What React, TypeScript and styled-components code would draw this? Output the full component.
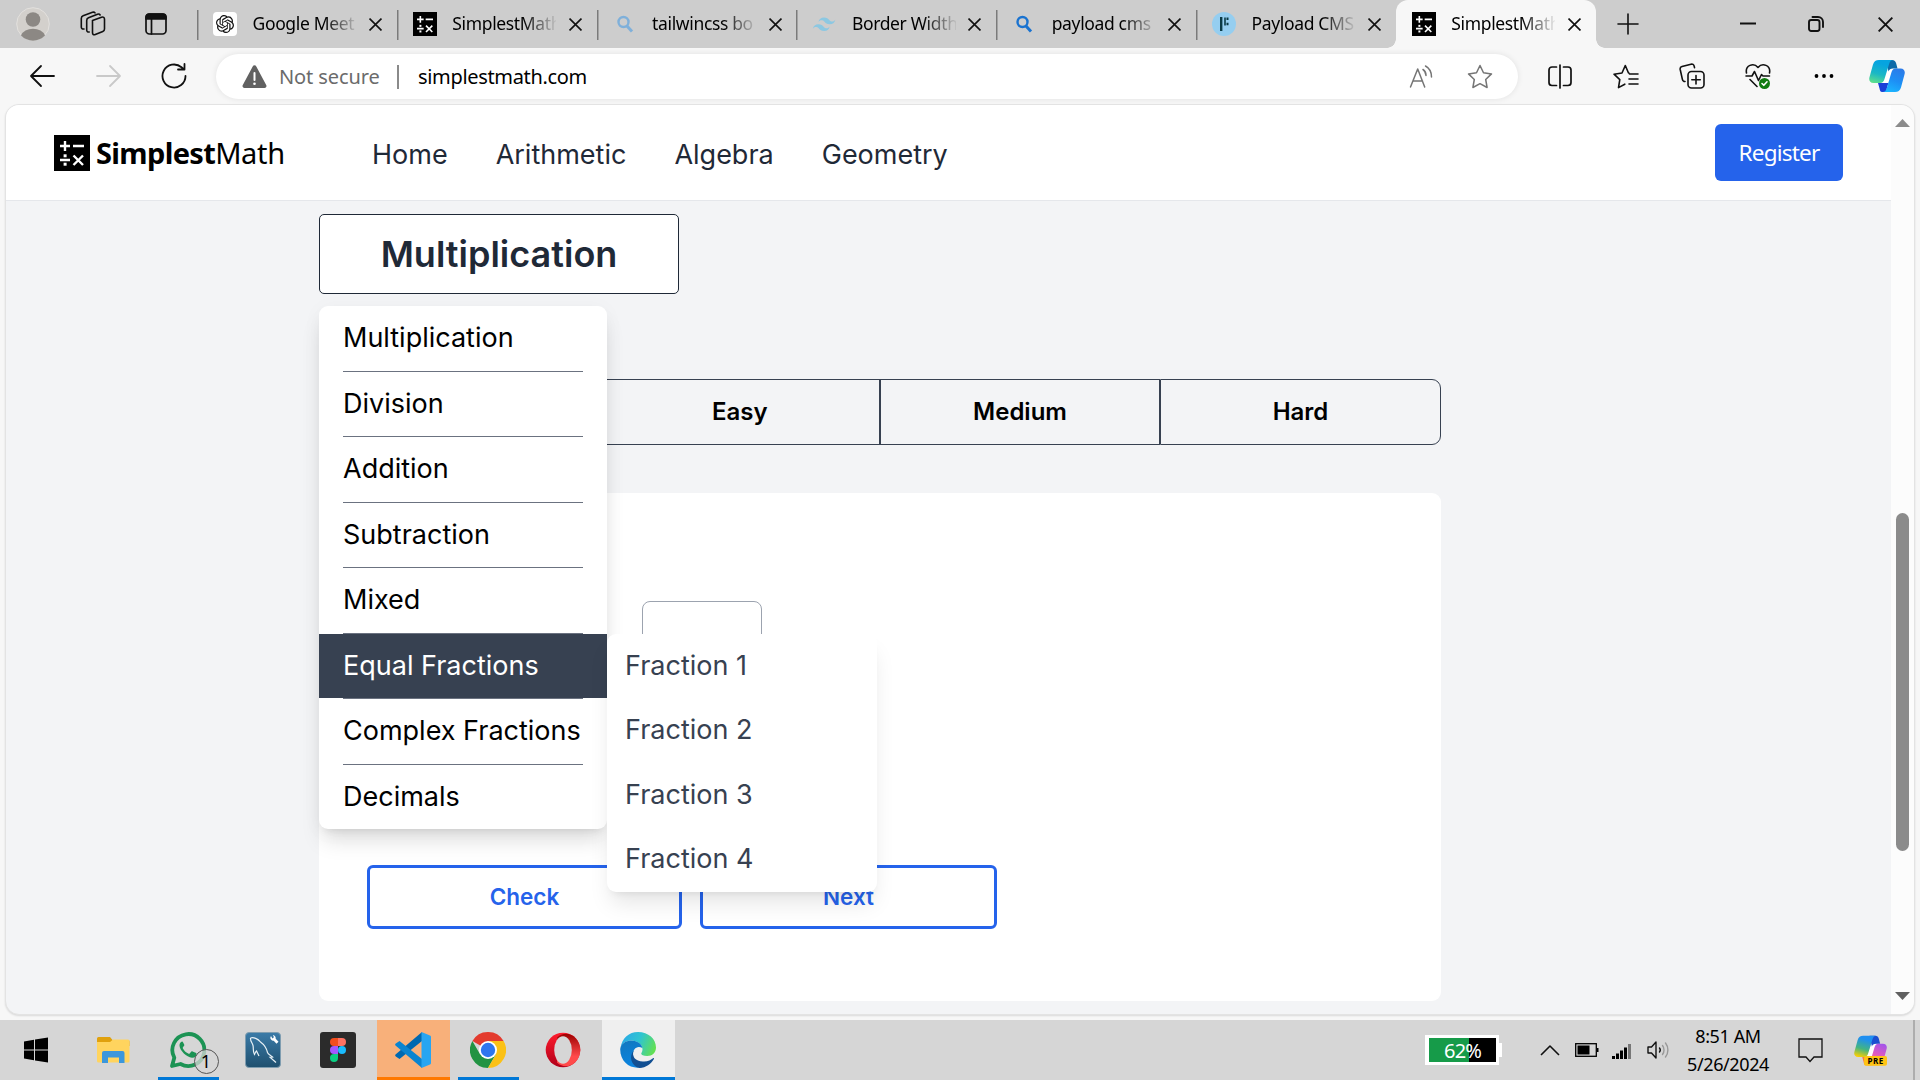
import React from "react";
import styled, { createGlobalStyle, css } from "styled-components";

const UI = '"Noto Sans", "Open Sans", sans-serif';
const INTER = 'Inter, "Open Sans", sans-serif';

const Global = createGlobalStyle`
  * { box-sizing: border-box; }
  html, body { margin: 0; padding: 0; overflow: hidden; }
  body { font-family: ${UI}; color: #000; }
  svg { display: block; flex: none; }
  button { font: inherit; margin: 0; cursor: pointer; }
`;

const Screen = styled.div`
  width: 1920px;
  height: 1080px;
  display: flex;
  flex-direction: column;
  background: #f7f7f7;
  overflow: hidden;
`;

/* ---------- Tab strip ---------- */
const TabStrip = styled.div`
  height: 48px;
  flex: none;
  display: flex;
  background: #cdcdcd;
`;
const StripTools = styled.div`
  width: 197px;
  flex: none;
  display: flex;
  align-items: center;
  padding-left: 16px;
`;
const ToolSlot = styled.div<{ $w: number }>`
  width: ${(p) => p.$w}px;
  flex: none;
`;
const Tab = styled.div<{ $active?: boolean }>`
  position: relative;
  width: ${(p) => (p.$active ? 200 : 199.8)}px;
  flex: none;
  display: flex;
  align-items: center;
  padding-left: 16px;
  ${(p) =>
    p.$active
      ? css`
          background: #f7f7f7;
          border-radius: 12px 12px 0 0;
          &::before, &::after {
            content: "";
            position: absolute;
            bottom: 0;
            width: 9px;
            height: 9px;
          }
          &::before { left: -9px; background: radial-gradient(circle at 0 0, transparent 8.5px, #f7f7f7 9px); }
          &::after { right: -9px; background: radial-gradient(circle at 100% 0, transparent 8.5px, #f7f7f7 9px); }
        `
      : css`
          background: linear-gradient(#7b7b7b, #7b7b7b) 0 10px / 1.5px 30px no-repeat;
        `}
`;
const TabLabel = styled.span`
  width: 104px;
  margin: 0 12.5px 2px 15.5px;
  overflow: hidden;
  white-space: nowrap;
  font-size: 17.5px;
  letter-spacing: -0.35px;
  line-height: 24px;
  mask-image: linear-gradient(to right, #000 68%, transparent 102%);
`;
const WindowTools = styled.div`
  flex: 1;
  display: flex;
  align-items: center;
  padding-left: 21px;
`;

/* ---------- Address bar ---------- */
const Toolbar = styled.div`
  height: 56px;
  flex: none;
  display: flex;
  align-items: center;
  padding: 0 0 0 29px;
`;
const AddressPill = styled.div`
  width: 1302px;
  height: 45px;
  flex: none;
  display: flex;
  align-items: center;
  background: #fff;
  border-radius: 23px;
  padding-left: 26px;
  margin-top: 1px;
  box-shadow: 0 0 6px rgba(0, 0, 0, 0.09);
`;
const Insecure = styled.span`
  width: 118px;
  margin-left: 12px;
  font-size: 20px;
  color: #6b6b6b;
  letter-spacing: -0.1px;
  white-space: nowrap;
`;
const PillRule = styled.i`
  width: 1.5px;
  height: 24px;
  background: #8a8a8a;
`;
const Url = styled.span`
  flex: 1;
  margin-left: 19.5px;
  font-size: 20px;
  letter-spacing: -0.33px;
`;

/* ---------- Page frame ---------- */
const Frame = styled.div`
  flex: 1;
  margin: 0 5px 5px 5px;
  display: flex;
  border: 1px solid #e3e3e3;
  border-radius: 14px;
  overflow: hidden;
  background: #f3f4f6;
  box-shadow: 0 1px 2px rgba(0, 0, 0, 0.12);
`;
const Page = styled.div`
  width: 1885px;
  flex: none;
  display: flex;
  flex-direction: column;
  font-family: ${INTER};
`;
const Header = styled.header`
  height: 96px;
  flex: none;
  display: flex;
  align-items: center;
  background: #fff;
  border-bottom: 1px solid #e5e7eb;
  padding: 0 48px;
`;
const Brand = styled.div`
  width: 318px;
  display: flex;
  align-items: center;
  gap: 6px;
  font-family: ${UI};
  font-size: 29px;
  letter-spacing: -0.35px;
  white-space: nowrap;
  b { font-weight: 700; letter-spacing: -0.65px; }
`;
const Nav = styled.nav`
  flex: 1;
  display: flex;
  gap: 48px;
  font-size: 27px;
  color: #1f2937;
  padding-top: 4px;
`;
const Register = styled.button`
  width: 128px;
  height: 57px;
  border: 0;
  border-radius: 6px;
  background: #2563eb;
  color: #fff;
  font-family: ${UI};
  font-size: 22.5px;
  letter-spacing: -0.8px;
  padding: 0;
`;
const Content = styled.main`
  width: 1122px;
  margin: 13px 0 0 313px;
  display: flex;
  flex-direction: column;
`;
const Picker = styled.div`
  position: relative;
  width: 360px;
  z-index: 1;
`;
const PickerButton = styled.button`
  display: block;
  width: 360px;
  height: 80px;
  border: 1px solid #1f2937;
  border-radius: 5px;
  background: #fff;
  color: #1f2937;
  font-size: 36px;
  font-weight: 600;
  padding: 0;
`;
const Levels = styled.div`
  display: flex;
  height: 66px;
  margin-top: 85px;
`;
const Level = styled.div`
  width: 280.5px;
  display: flex;
  align-items: center;
  justify-content: center;
  border: 1px solid #374151;
  font-size: 24px;
  font-weight: 600;
  padding-bottom: 2px;
  &:first-child { border-radius: 9px 0 0 9px; }
  &:nth-child(3) { width: 280px; }
  &:last-child { width: 281px; border-radius: 0 9px 9px 0; }
`;
const Card = styled.section`
  height: 508px;
  margin-top: 48px;
  display: flex;
  flex-direction: column;
  justify-content: space-between;
  background: #fff;
  border-radius: 9px;
  padding: 108px 48px 72px;
`;
const Answer = styled.div`
  width: 120px;
  height: 66px;
  margin-left: 275px;
  border: 1px solid #9ca3af;
  border-radius: 8px;
`;
const Actions = styled.div`
  display: flex;
  gap: 18px;
`;
const Action = styled.button<{ $w: number }>`
  width: ${(p) => p.$w}px;
  height: 64px;
  border: 3px solid #2563eb;
  border-radius: 6px;
  background: #fff;
  color: #2563eb;
  font-size: 22.5px;
  font-weight: 600;
  padding: 0 0 1px;
`;

/* ---------- Menus ---------- */
const panel = css`
  position: absolute;
  background: #fff;
  border-radius: 9px;
  font-size: 27px;
`;
const Menu = styled.div`
  ${panel}
  left: 0;
  top: 92px;
  width: 288px;
  box-shadow: 0 15px 22.5px -4.5px rgba(0, 0, 0, 0.13), 0 6px 9px -6px rgba(0, 0, 0, 0.11), 0 3px 20px rgba(0, 0, 0, 0.04);
`;
const MenuItem = styled.div<{ $selected?: boolean }>`
  position: relative;
  height: 64.5px;
  display: flex;
  align-items: center;
  padding: 0 0 1px 24px;
  white-space: nowrap;
  ${(p) => p.$selected && css`background: #374151; color: #fff;`}
`;
const MenuRule = styled.div`
  height: 1px;
  margin: 0 24px;
  background: #6b7280;
`;
const SubMenu = styled.div`
  ${panel}
  left: 288px;
  top: 0;
  width: 270px;
  color: #374151;
  box-shadow: 0 15px 22.5px -4.5px rgba(0, 0, 0, 0.1), 0 6px 9px -6px rgba(0, 0, 0, 0.1);
`;
const SubItem = styled.div`
  height: 64.5px;
  display: flex;
  align-items: center;
  padding: 0 0 1px 18px;
`;

/* ---------- Scrollbar ---------- */
const Scrollbar = styled.div`
  flex: 1;
  display: flex;
  flex-direction: column;
  align-items: center;
  justify-content: space-between;
  padding: 14px 0 14px;
  background: #fcfcfc;
`;
const Thumb = styled.div`
  width: 13px;
  height: 338px;
  margin-top: 245px;
  border-radius: 7px;
  background: #8b8b8b;
`;

/* ---------- Taskbar ---------- */
const Taskbar = styled.div`
  height: 60px;
  flex: none;
  display: flex;
  align-items: center;
  background: #d6d6d6;
`;
const Apps = styled.div`
  display: flex;
  gap: 2px;
  flex: 1;
`;
const Launcher = styled.div<{ $bg?: string; $line?: string; $inset?: number }>`
  position: relative;
  width: 73px;
  height: 60px;
  display: flex;
  align-items: center;
  justify-content: center;
  background: ${(p) => p.$bg ?? "transparent"};
  &:first-child { width: 74.5px; padding-right: 3px; }
  &::after {
    content: "";
    position: absolute;
    left: ${(p) => p.$inset ?? 0}px;
    right: ${(p) => p.$inset ?? 0}px;
    bottom: 0;
    height: 3px;
    background: ${(p) => p.$line ?? "transparent"};
  }
`;
const Count = styled.span`
  position: absolute;
  left: 42px;
  top: 29px;
  width: 25px;
  height: 25px;
  border: 1px solid #555;
  border-radius: 50%;
  background: rgba(214, 214, 214, 0.75);
  font-size: 18px;
  line-height: 23px;
  text-align: center;
`;
const Tray = styled.div`
  width: 495px;
  flex: none;
  display: flex;
  align-items: center;
  height: 60px;
`;
const Charge = styled.div`
  position: relative;
  width: 74px;
  height: 30px;
  border: 3px solid #fff;
  border-left-width: 4px;
  background: linear-gradient(to right, #169b49 60%, #000 60%);
  color: #fff;
  font-size: 20px;
  letter-spacing: -0.9px;
  line-height: 26px;
  text-align: center;
  &::after {
    content: "";
    position: absolute;
    right: -6px;
    top: 5px;
    width: 3px;
    height: 14px;
    background: #fff;
  }
`;
const Spot = styled.div<{ $ml: number }>`
  margin-left: ${(p) => p.$ml}px;
  flex: none;
`;
const Clock = styled.div`
  width: 96px;
  margin-left: 10px;
  text-align: center;
  font-size: 18px;
  letter-spacing: -0.4px;
  line-height: 28px;
`;
const ShowDesktop = styled.i`
  width: 2px;
  height: 60px;
  margin-left: 26px;
  background: #adadad;
`;

/* ---------- Icons ---------- */
type SvgProps = React.SVGProps<SVGSVGElement>;
const Line = ({ children, ...p }: SvgProps) => (
  <svg fill="none" stroke="#111" strokeWidth="1.6" strokeLinecap="round" strokeLinejoin="round" {...p}>
    {children}
  </svg>
);

const MathIcon = ({ size }: { size: number }) => (
  <svg width={size} height={size} viewBox="0 0 36 36">
    <rect width="36" height="36" />
    <g stroke="#fff" strokeWidth="2.4">
      <path d="M6 11h10M11 6v10M19 11h11M6 25h10M19.500 20.500l9.500 9.500M29 20.500l-9.500 9.500" />
    </g>
    <g fill="#fff">
      <rect x="9.600" y="19.300" width="3" height="3" />
      <rect x="9.600" y="27.700" width="3" height="3" />
    </g>
  </svg>
);
const Close = ({ size = 13 }: { size?: number }) => (
  <Line width={size} height={size} viewBox="0 0 12 12" strokeLinecap="butt" strokeWidth="1.500">
    <path d="M0.500 .5l11 11M11.500 .5l-11 11" />
  </Line>
);
const Search = ({ color }: { color: string }) => (
  <svg width="24" height="24" viewBox="0 0 24 24" fill="none" stroke={color} strokeWidth="2.400">
    <circle cx="10.500" cy="10" r="5" />
    <path d="M14 14l5 5.500" strokeWidth="3" />
  </svg>
);
const OpenAI = () => (
  <svg width="24" height="24" viewBox="0 0 24 24">
    <rect width="24" height="24" rx="4" fill="#fff" />
    <path
      transform="translate(3 3) scale(.75)"
      fill="#111"
      d="M22.2819 9.8211a5.9847 5.9847 0 0 0-.5157-4.9108 6.0462 6.0462 0 0 0-6.5098-2.9A6.0651 6.0651 0 0 0 4.9807 4.1818a5.9847 5.9847 0 0 0-3.9977 2.9 6.0462 6.0462 0 0 0 .7427 7.0966 5.98 5.98 0 0 0 .511 4.9107 6.051 6.051 0 0 0 6.5146 2.9001A5.9847 5.9847 0 0 0 13.2599 24a6.0557 6.0557 0 0 0 5.7718-4.2058 5.9894 5.9894 0 0 0 3.9977-2.9001 6.0557 6.0557 0 0 0-.7475-7.0729zm-9.022 12.6081a4.4755 4.4755 0 0 1-2.8764-1.0408l.1419-.0804 4.7783-2.7582a.7948.7948 0 0 0 .3927-.6813v-6.7369l2.02 1.1686a.071.071 0 0 1 .038.052v5.5826a4.504 4.504 0 0 1-4.4945 4.4944zm-9.6607-4.1254a4.4708 4.4708 0 0 1-.5346-3.0137l.142.0852 4.783 2.7582a.7712.7712 0 0 0 .7806 0l5.8428-3.3685v2.3324a.0804.0804 0 0 1-.0332.0615L9.74 19.9502a4.4992 4.4992 0 0 1-6.1408-1.6464zM2.3408 7.8956a4.485 4.485 0 0 1 2.3655-1.9728V11.6a.7664.7664 0 0 0 .3879.6765l5.8144 3.3543-2.0201 1.1685a.0757.0757 0 0 1-.071 0l-4.8303-2.7865A4.504 4.504 0 0 1 2.3408 7.872zm16.5963 3.8558L13.1038 8.364 15.1192 7.2a.0757.0757 0 0 1 .071 0l4.8303 2.7913a4.4944 4.4944 0 0 1-.6765 8.1042v-5.6772a.79.79 0 0 0-.407-.667zm2.0107-3.0231l-.142-.0852-4.7735-2.7818a.7759.7759 0 0 0-.7854 0L9.409 9.2297V6.8974a.0662.0662 0 0 1 .0284-.0615l4.8303-2.7866a4.4992 4.4992 0 0 1 6.6802 4.66zM8.3065 12.863l-2.02-1.1638a.0804.0804 0 0 1-.038-.0567V6.0742a4.4992 4.4992 0 0 1 7.3757-3.4537l-.142.0805L8.704 5.459a.7948.7948 0 0 0-.3927.6813zm1.0976-2.3654l2.602-1.4998 2.6069 1.4998v2.9994l-2.5974 1.4997-2.6067-1.4997Z"
    />
  </svg>
);
const Tailwind = () => (
  <svg width="24" height="24" viewBox="0 0 24 24" fill="#8cc8e2">
    <path d="M12 5.500c-3 0-4.900 1.500-5.600 4.500 1.100-1.500 2.400-2.100 3.900-1.700.9.200 1.500.8 2.200 1.500C13.600 11 14.900 12.300 17.700 12.300c3 0 4.900-1.500 5.600-4.500-1.100 1.500-2.400 2.100-3.900 1.700-.9-.2-1.500-.8-2.200-1.500C16.100 6.800 14.800 5.500 12 5.500zM6.400 12.200c-3 0-4.900 1.500-5.600 4.500 1.100-1.500 2.400-2.100 3.900-1.700.9.200 1.500.8 2.200 1.500 1.100 1.200 2.400 2.500 5.200 2.500 3 0 4.900-1.500 5.600-4.500-1.100 1.500-2.400 2.100-3.900 1.700-.9-.2-1.500-.8-2.200-1.500-1.100-1.200-2.400-2.500-5.200-2.500z" />
  </svg>
);
const PayloadIcon = () => (
  <svg width="24" height="24" viewBox="0 0 24 24">
    <circle cx="12" cy="12" r="12" fill="#95cef0" />
    <path d="M9.200 5v14" stroke="#0b3b46" strokeWidth="2.400" />
    <path d="M13 5.500v8" stroke="#0b3b46" strokeWidth="1.600" />
    <path d="M14.500 6.700h2M14.500 12h2" stroke="#0b3b46" strokeWidth="2.600" />
  </svg>
);
const Copilot = ({ w, h, pre }: { w: number; h: number; pre?: boolean }) => (
  <svg width={w} height={h} viewBox="0 0 36 32">
    <defs>
      <linearGradient id={pre ? "cpA" : "cA"} x1="0.500" y1="0" x2="0.200" y2="1">
        <stop offset="0.150" stopColor={pre ? "#1f8ff0" : "#06a4e0"} />
        <stop offset="0.600" stopColor={pre ? "#43b581" : "#1bb8c4"} />
        <stop offset="1" stopColor={pre ? "#ffd000" : "#5fe08a"} />
      </linearGradient>
      <linearGradient id={pre ? "cpB" : "cB"} x1="0.700" y1="0" x2="0.300" y2="1">
        <stop offset="0" stopColor={pre ? "#a555e8" : "#2b7be8"} />
        <stop offset="0.500" stopColor={pre ? "#e05ac0" : "#1d8ff5"} />
        <stop offset="1" stopColor={pre ? "#ff8a50" : "#1bb6ff"} />
      </linearGradient>
    </defs>
    <path d="M13 23L19 9h7l-5 14z" fill="#fff" />
    <path d="M17 0h6c2.500 0 3.500 1.200 4.200 3.500L28.500 8.500H24c-2.500 0-3.800 1-4.500 3z" fill={pre ? "#1b4fd0" : "#0e6aa8"} />
    <path d="M13 32h6c-1.500-1-1.500-3-.8-5l1.300-4H9l1.500 5.500C11 31 11.500 32 13 32z" fill={pre ? "#ff7a3c" : "#1a40d8"} />
    <path d="M10 0h14.500c-2.500 0-3.600 1.500-4.400 4l-4.600 15c-.8 2.800-2 4-4.500 4H4.500C1 23-.3 20.500.4 17.500L4 4.500C5 1.300 6.800 0 10 0z" fill={`url(#${pre ? "cpA" : "cA"})`} />
    <path d="M26 32H13.500c2.500 0 3.500-1.500 4.300-4l4.600-15.500c.8-2.800 2-4 4.500-4h4.600c3.500 0 4.800 2.500 4.100 5.500L32 27.500c-1 3.200-2.800 4.500-6 4.500z" fill={`url(#${pre ? "cpB" : "cB"})`} />
    {pre && (
      <>
        <rect x="11" y="22" width="25" height="10.500" rx="2" fill="#ffc414" />
        <text x="23.600" y="30.300" fontSize="8.800" fontWeight="700" fontFamily="Noto Sans" textAnchor="middle" letterSpacing="0.500">PRE</text>
      </>
    )}
  </svg>
);

const tabs = [
  { icon: <OpenAI />, label: "Google Meet" },
  { icon: <MathIcon size={24} />, label: "SimplestMath" },
  { icon: <Search color="#7fb0da" />, label: "tailwincss bo" },
  { icon: <Tailwind />, label: "Border Width" },
  { icon: <Search color="#1a73d0" />, label: "payload cms" },
  { icon: <PayloadIcon />, label: "Payload CMS" },
  { icon: <MathIcon size={24} />, label: "SimplestMath", active: true },
];

const topics = ["Multiplication", "Division", "Addition", "Subtraction", "Mixed", "Equal Fractions", "Complex Fractions", "Decimals"];
const fractions = ["Fraction 1", "Fraction 2", "Fraction 3", "Fraction 4"];

const BrowserTabs = () => (
  <TabStrip>
    <StripTools>
      <ToolSlot $w={64}>
        <svg width="34" height="34" viewBox="0 0 34 34">
          <circle cx="17" cy="17" r="16.300" fill="#d3d0cc" stroke="#e3e1de" />
          <circle cx="17" cy="12.500" r="7.300" fill="#8c8884" />
          <path d="M5 28.500a12.500 9.500 0 0 1 24 0A16.500 16.500 0 0 1 5 28.500z" fill="#8c8884" />
        </svg>
      </ToolSlot>
      <ToolSlot $w={65}>
        <Line width="26" height="26" viewBox="0 0 26 26" strokeWidth="1.600">
          <path d="M12.500 9.500l9-3.300c1.800-.6 3 .2 3 2V18c0 1.200-.6 2-1.700 2.400l-7.500 3.100c-1.700.7-2.800 0-2.800-1.800V9.500M9.200 21c-1.500.3-2.500-.4-2.500-2V9.500c0-1.300.6-2.200 1.800-2.700l9-3.600c1.200-.4 2.100-.1 2.600.8M4 18C2.200 18.200 1.300 17.500 1.300 16V7.500C1.300 6.200 2 5.200 3.100 4.800L12.500 1.300c1.200-.4 2-.1 2.500.6" />
        </Line>
      </ToolSlot>
      <Line width="22" height="22" viewBox="0 0 22 22" strokeWidth="1.700">
        <rect x="1" y="1" width="20" height="20" rx="3.500" />
        <path d="M1 6V4a3 3 0 0 1 3-3h14a3 3 0 0 1 3 3v2zM6.500 6v15" fill="#111" />
      </Line>
    </StripTools>
    {tabs.map((t, i) => (
      <Tab key={i} $active={t.active}>
        {t.icon}
        <TabLabel>{t.label}</TabLabel>
        <Close />
      </Tab>
    ))}
    <WindowTools>
      <ToolSlot $w={123}>
        <Line width="22" height="22" viewBox="0 0 22 22"><path d="M1 11h20M11 1v20" /></Line>
      </ToolSlot>
      <ToolSlot $w={68}>
        <Line width="16" height="16" viewBox="0 0 16 16" strokeLinecap="butt" strokeWidth="2"><path d="M0 7.500h16" /></Line>
      </ToolSlot>
      <ToolSlot $w={70}>
        <Line width="16" height="16" viewBox="0 0 16 16" strokeWidth="1.900">
          <rect x="1" y="4" width="10.500" height="11" rx="2.200" />
          <path d="M4.500 1H10a5 5 0 0 1 5 5v5" />
        </Line>
      </ToolSlot>
      <Close size={15} />
    </WindowTools>
  </TabStrip>
);

const AddressBar = () => (
  <Toolbar>
    <ToolSlot $w={67}>
      <Line width="26" height="24" viewBox="0 0 26 24" strokeWidth="1.800"><path d="M25 12H2M12 2L2 12l10 10" /></Line>
    </ToolSlot>
    <ToolSlot $w={65}>
      <Line width="26" height="24" viewBox="0 0 26 24" stroke="#c9c9c9" strokeWidth="1.800"><path d="M1 12h23M14 2l10 10-10 10" /></Line>
    </ToolSlot>
    <ToolSlot $w={55}>
      <Line width="26" height="26" viewBox="0 0 26 26" strokeWidth="1.800"><path d="M24.500 13A11.500 11.500 0 1 1 20.500 4.300L22.500 6M23.500 1v5.500H17" /></Line>
    </ToolSlot>
    <AddressPill>
      <svg width="25" height="24" viewBox="0 0 25 24">
        <path d="M10.700 1.500a2 2 0 0 1 3.600 0L24.200 20a2 2 0 0 1-1.800 3H2.600a2 2 0 0 1-1.800-3z" fill="#616161" />
        <path d="M12.500 8v7" stroke="#fff" strokeWidth="2" strokeLinecap="round" />
        <circle cx="12.500" cy="18.700" r="1.300" fill="#fff" />
      </svg>
      <Insecure>Not secure</Insecure>
      <PillRule />
      <Url>simplestmath.com</Url>
      <ToolSlot $w={58}>
        <Line width="24" height="24" viewBox="0 0 24 24" stroke="#757575" strokeWidth="1.500">
          <path d="M1.500 22L8.700 4l7 18M4 16h9.500M14 4.500c2 1.300 3 3.200 3 6M16.500 1c4 2.200 6 6 6 11" />
        </Line>
      </ToolSlot>
      <ToolSlot $w={51}>
        <Line width="26" height="25" viewBox="0 0 26 25" stroke="#757575" strokeWidth="1.500">
          <path d="M13 1.500l3.500 7.300 8 1.100-5.800 5.600 1.400 8L13 19.700l-7.100 3.800 1.400-8L1.500 9.900l8-1.100z" />
        </Line>
      </ToolSlot>
    </AddressPill>
    <Spot $ml={30}>
      <Line width="24" height="25" viewBox="0 0 24 25" strokeWidth="1.700">
        <path d="M8.500 3H4a3 3 0 0 0-3 3v12.500a3 3 0 0 0 3 3h4.500M15.500 3H20a3 3 0 0 1 3 3v12.500a3 3 0 0 1-3 3h-4.500M12 1v23" />
      </Line>
    </Spot>
    <Spot $ml={41}>
      <Line width="26" height="25" viewBox="0 0 26 25">
        <path d="M16 9h-.5L12.300 1.500 9 9l-8 1.200 5.800 5.400-1.300 8 6.300-3.400M16.500 10H25M16 15h9M16 20h9" />
      </Line>
    </Spot>
    <Spot $ml={40}>
      <Line width="26" height="26" viewBox="0 0 26 26">
        <rect x="9" y="8.500" width="16" height="16.500" rx="3.500" />
        <path d="M17 12.500v8.500M12.800 16.800h8.500M6 18.500c-1.500 0-2.300-.8-2.600-2.200L1.200 6.500C.9 5 1.600 3.900 3 3.500L12 1.200c1.600-.4 2.800.4 3.200 2l.3 1.500" />
      </Line>
    </Spot>
    <Spot $ml={40}>
      <Line width="26" height="27" viewBox="0 0 26 27">
        <path d="M1.500 10C0 2.500 8.500-1 13 4.500 17.500-1 26 2.500 24.500 10M1 13h6l2.500-4.500 4 9 3-6 1.500 1.500h6.500M5 16.500l7 7" />
        <circle cx="19.500" cy="20.500" r="5.500" fill="#107c10" stroke="none" />
        <path d="M17 20.500l1.800 1.800 3.200-3.500" stroke="#fff" />
      </Line>
    </Spot>
    <Spot $ml={43}>
      <svg width="20" height="6" viewBox="0 0 20 6"><circle cx="2.500" cy="3" r="1.900" /><circle cx="10" cy="3" r="1.900" /><circle cx="17.500" cy="3" r="1.900" /></svg>
    </Spot>
    <Spot $ml={35}><Copilot w={36} h={32} /></Spot>
  </Toolbar>
);

const TaskbarRow = () => (
  <Taskbar>
    <Apps>
      <Launcher>
        <svg width="26" height="26" viewBox="0 0 26 26"><path d="M1 4.500l10-1.700v9.700H1zM12 2.600L25 .5v12H12zM1 13.500h10v9.700L1 21.500zM12 13.500h13v12l-13-2.100z" /></svg>
      </Launcher>
      <Launcher>
        <svg width="33" height="28" viewBox="0 0 33 28">
          <path d="M0 2.500A1.500 1.500 0 0 1 1.500 1H13l2.500 3H31a1.500 1.500 0 0 1 1.500 1.500V10H0z" fill="#e0a10e" />
          <path d="M0 6h13l3-2.500h15a1.500 1.500 0 0 1 1.500 1.500V25a1.500 1.500 0 0 1-1.500 1.500H1.500A1.500 1.500 0 0 1 0 25z" fill="#ffd45e" />
          <path d="M5 27V17a2 2 0 0 1 2-2h18.500a2 2 0 0 1 2 2v10H22v-5.500H11V27z" fill="#3b97dc" />
        </svg>
      </Launcher>
      <Launcher $line="#0078d7" $inset={6}>
        <svg width="38" height="38" viewBox="0 0 38 38">
          <path d="M3 35l2.300-8.300A16 16 0 1 1 11.500 33z" fill="none" stroke="#1c9354" strokeWidth="3.800" strokeLinejoin="round" />
          <path d="M13 10.500c-1 .2-2.700 1.800-2.500 4.300.5 5 7 11.500 12.500 12 2.700.2 4.500-1.700 4.600-3.600 0-.8-.2-1-1-1.400l-3-1.400c-.8-.3-1.200-.2-1.700.5l-1.200 1.500c-.4.500-.9.500-1.500.2-2.500-1.200-4-2.800-5.300-5-.3-.6-.2-1 .2-1.500l1-1.300c.3-.4.3-.8.100-1.300L14 11.300c-.2-.6-.5-.9-1-.8z" fill="#1c9354" />
        </svg>
        <Count>1</Count>
      </Launcher>
      <Launcher>
        <svg width="36" height="36" viewBox="0 0 36 36">
          <defs><linearGradient id="sql" x1="0" y1="0" x2="0" y2="1"><stop offset="0" stopColor="#3b7ba8" /><stop offset="1" stopColor="#1f506f" /></linearGradient></defs>
          <rect x=".5" y=".5" width="35" height="35" rx="3.500" fill="url(#sql)" stroke="#7f9db0" />
          <path d="M5.500 6c3-1.200 7.500.8 10 4 3.500 2.500 6 6 7 10.500.6 2 3.500 3 5 4.500l-2.500.3 6 5.200M5.500 6c-.3 3 1.700 4.500 2.500 7.500.8 3-.5 5.500 1.500 9 .8-1.500.8-2.500 2-3.500l2.500 5" fill="none" stroke="#e8f1f6" strokeWidth="1.200" />
          <path d="M26 4c-1.200 1.500-.8 3.200.8 4.200 1 .6 1.900.5 1.900.5l2.800 3 2-2-2.800-3s.2-1.200-.5-2.200C29.400 3.300 28 3 28 3l.9 2.300-1.500 1.100z" fill="#fff" />
        </svg>
      </Launcher>
      <Launcher>
        <svg width="36" height="36" viewBox="0 0 36 36">
          <rect width="36" height="36" rx="3" fill="#2b2b2b" />
          <path d="M18 6h-4a4 4 0 0 0 0 8h4z" fill="#f24e1e" />
          <path d="M18 6h4a4 4 0 0 1 0 8h-4z" fill="#ff7262" />
          <path d="M18 14h-4a4 4 0 0 0 0 8h4z" fill="#a259ff" />
          <circle cx="22" cy="18" r="4" fill="#1abcfe" />
          <path d="M18 22h-4a4 4 0 1 0 4 4z" fill="#0acf83" />
        </svg>
      </Launcher>
      <Launcher $bg="#f8b07a" $line="#ff7800">
        <svg width="36" height="36" viewBox="0 0 36 36">
          <path d="M27 0v9L4.500 27 .8 24.500a1.500 1.500 0 0 1 0-2.300z" fill="#0068b0" />
          <path d="M27 36v-9L4.500 9 .8 11.500a1.500 1.500 0 0 0 0 2.300z" fill="#0a84d0" />
          <path d="M26.500 0L35 3.500a1.500 1.500 0 0 1 1 1.500v26a1.500 1.500 0 0 1-1 1.500L26.500 36z" fill="#27a5f2" />
        </svg>
      </Launcher>
      <Launcher $line="#0078d7" $inset={6}>
        <svg width="36" height="36" viewBox="0 0 36 36">
          <path d="M18 18L2.410 9A18 18 0 0 1 33.590 9z" fill="#e33b2e" />
          <path d="M18 18l7.800 4.500L18 36A18 18 0 0 1 2.410 9l7.800 13.500z" fill="#229342" />
          <path d="M18 9h15.590A18 18 0 0 1 18 36l7.800-13.500z" fill="#fbc116" />
          <circle cx="18" cy="18" r="9" fill="#fff" />
          <circle cx="18" cy="18" r="7.200" fill="#2f76ee" />
        </svg>
      </Launcher>
      <Launcher>
        <svg width="36" height="36" viewBox="0 0 36 36">
          <defs>
            <linearGradient id="opA" x1="0" y1="0" x2="0" y2="1"><stop offset="0" stopColor="#ff1b2d" /><stop offset="1" stopColor="#b0001a" /></linearGradient>
            <linearGradient id="opB" x1="0" y1="0" x2="0" y2="1"><stop offset="0" stopColor="#9c0000" /><stop offset=".7" stopColor="#ff4b4b" /></linearGradient>
          </defs>
          <circle cx="18" cy="18" r="17.300" fill="url(#opA)" />
          <path d="M12 5.500C21-3 35 4 35.300 18 35 32 21 39 12 30.500z" fill="url(#opB)" />
          <ellipse cx="18" cy="18" rx="8.800" ry="13.700" fill="#d6d6d6" />
        </svg>
      </Launcher>
      <Launcher $bg="#efefef" $line="#0078d7">
        <svg width="36" height="36" viewBox="0 0 36 36">
          <defs>
            <linearGradient id="eA" x1="0" y1=".3" x2="1" y2=".6"><stop offset="0" stopColor="#2aa9e8" /><stop offset=".5" stopColor="#2fc5d0" /><stop offset="1" stopColor="#63e052" /></linearGradient>
            <linearGradient id="eB" x1="0" y1="0" x2=".3" y2="1"><stop offset="0" stopColor="#1277be" /><stop offset="1" stopColor="#0a84e0" /></linearGradient>
          </defs>
          <path d="M.5 16C2 6 9 0 18 0c10.500 0 18 7 18 15.500 0 5-3.800 8.500-8.800 8.500-4 0-6-1.300-6-2.500 0-.8 1.300-1.500 1.300-4C22.500 12 17 8.500 11 8.500 6 8.500 2 11.500.5 16z" fill="url(#eA)" />
          <path d="M.2 17C1 12 5.500 8.500 11 8.500c5.500 0 10.500 2.800 11.400 7.500-6-3-9.400 2-9.400 6 0 6 5 12 12 12-11 5-25-1.500-24.800-17z" fill="url(#eB)" />
          <path d="M13.800 18.500C11 24.500 16 30 24 29.500c4 0 7.500-2 9-3.300.6-.4 1.200.2.900.8C31 32 26 35.600 19.500 36 11 34 8.500 24 13.800 18.500z" fill="#114f92" />
        </svg>
      </Launcher>
    </Apps>
    <Tray>
      <Charge>62%</Charge>
      <Spot $ml={41}><Line width="20" height="12" viewBox="0 0 20 12" strokeLinecap="butt"><path d="M1 11l9-9 9 9" /></Line></Spot>
      <Spot $ml={15}>
        <svg width="24" height="14" viewBox="0 0 24 14"><rect x=".7" y=".7" width="20.600" height="12.600" fill="none" stroke="#000" strokeWidth="1.300" /><path d="M2.500 2.500h12v9h-12zM22 5h1.500v4H22z" /></svg>
      </Spot>
      <Spot $ml={13}>
        <svg width="19" height="18" viewBox="0 0 19 18"><path d="M0 15h3v3H0zM4 12.500h3V18H4zM8 9.500h3V18H8zM12 6.500h3V18h-3z" /><path d="M16 3h3v15h-3z" fill="#777" /></svg>
      </Spot>
      <Spot $ml={16}>
        <Line width="23" height="20" viewBox="0 0 23 20" strokeWidth="1.400">
          <path d="M1 7h3.500L9 2v16l-4.500-5H1zM12.500 8c.8 1 .8 3 0 4" />
          <path d="M15.500 5.500c2 2.500 2 6.500 0 9M18.500 3c3.200 4 3.200 10 0 14" stroke="#999" />
        </Line>
      </Spot>
      <Clock>
        <div>8:51 AM</div>
        <div>5/26/2024</div>
      </Clock>
      <Spot $ml={22}>
        <Line width="25" height="25" viewBox="0 0 25 25" strokeWidth="1.300" strokeLinejoin="miter"><path d="M1 1h23v18h-8l-4 4.500L8 19H1z" /></Line>
      </Spot>
      <Spot $ml={31}><Copilot w={33} h={31} pre /></Spot>
      <ShowDesktop />
    </Tray>
  </Taskbar>
);

export default function App() {
  return (
    <Screen>
      <Global />
      <BrowserTabs />
      <AddressBar />
      <Frame>
        <Page>
          <Header>
            <Brand>
              <MathIcon size={36} />
              <span><b>Simplest</b>Math</span>
            </Brand>
            <Nav>
              <span>Home</span>
              <span>Arithmetic</span>
              <span>Algebra</span>
              <span>Geometry</span>
            </Nav>
            <Register>Register</Register>
          </Header>
          <Content>
            <Picker>
              <PickerButton>Multiplication</PickerButton>
              <Menu>
                {topics.map((t, i) => (
                  <React.Fragment key={t}>
                    {i > 0 && <MenuRule />}
                    <MenuItem $selected={t === "Equal Fractions"}>
                      {t}
                      {t === "Equal Fractions" && (
                        <SubMenu>
                          {fractions.map((f) => <SubItem key={f}>{f}</SubItem>)}
                        </SubMenu>
                      )}
                    </MenuItem>
                  </React.Fragment>
                ))}
              </Menu>
            </Picker>
            <Levels>
              <Level />
              <Level>Easy</Level>
              <Level>Medium</Level>
              <Level>Hard</Level>
            </Levels>
            <Card>
              <Answer />
              <Actions>
                <Action $w={315}>Check</Action>
                <Action $w={297}>Next</Action>
              </Actions>
            </Card>
          </Content>
        </Page>
        <Scrollbar>
          <svg width="15" height="8" viewBox="0 0 15 8"><path d="M0 8L7.500 0 15 8z" fill="#8b8b8b" /></svg>
          <Thumb />
          <svg width="15" height="8" viewBox="0 0 15 8"><path d="M0 0l7.500 8L15 0z" fill="#606060" /></svg>
        </Scrollbar>
      </Frame>
      <TaskbarRow />
    </Screen>
  );
}
